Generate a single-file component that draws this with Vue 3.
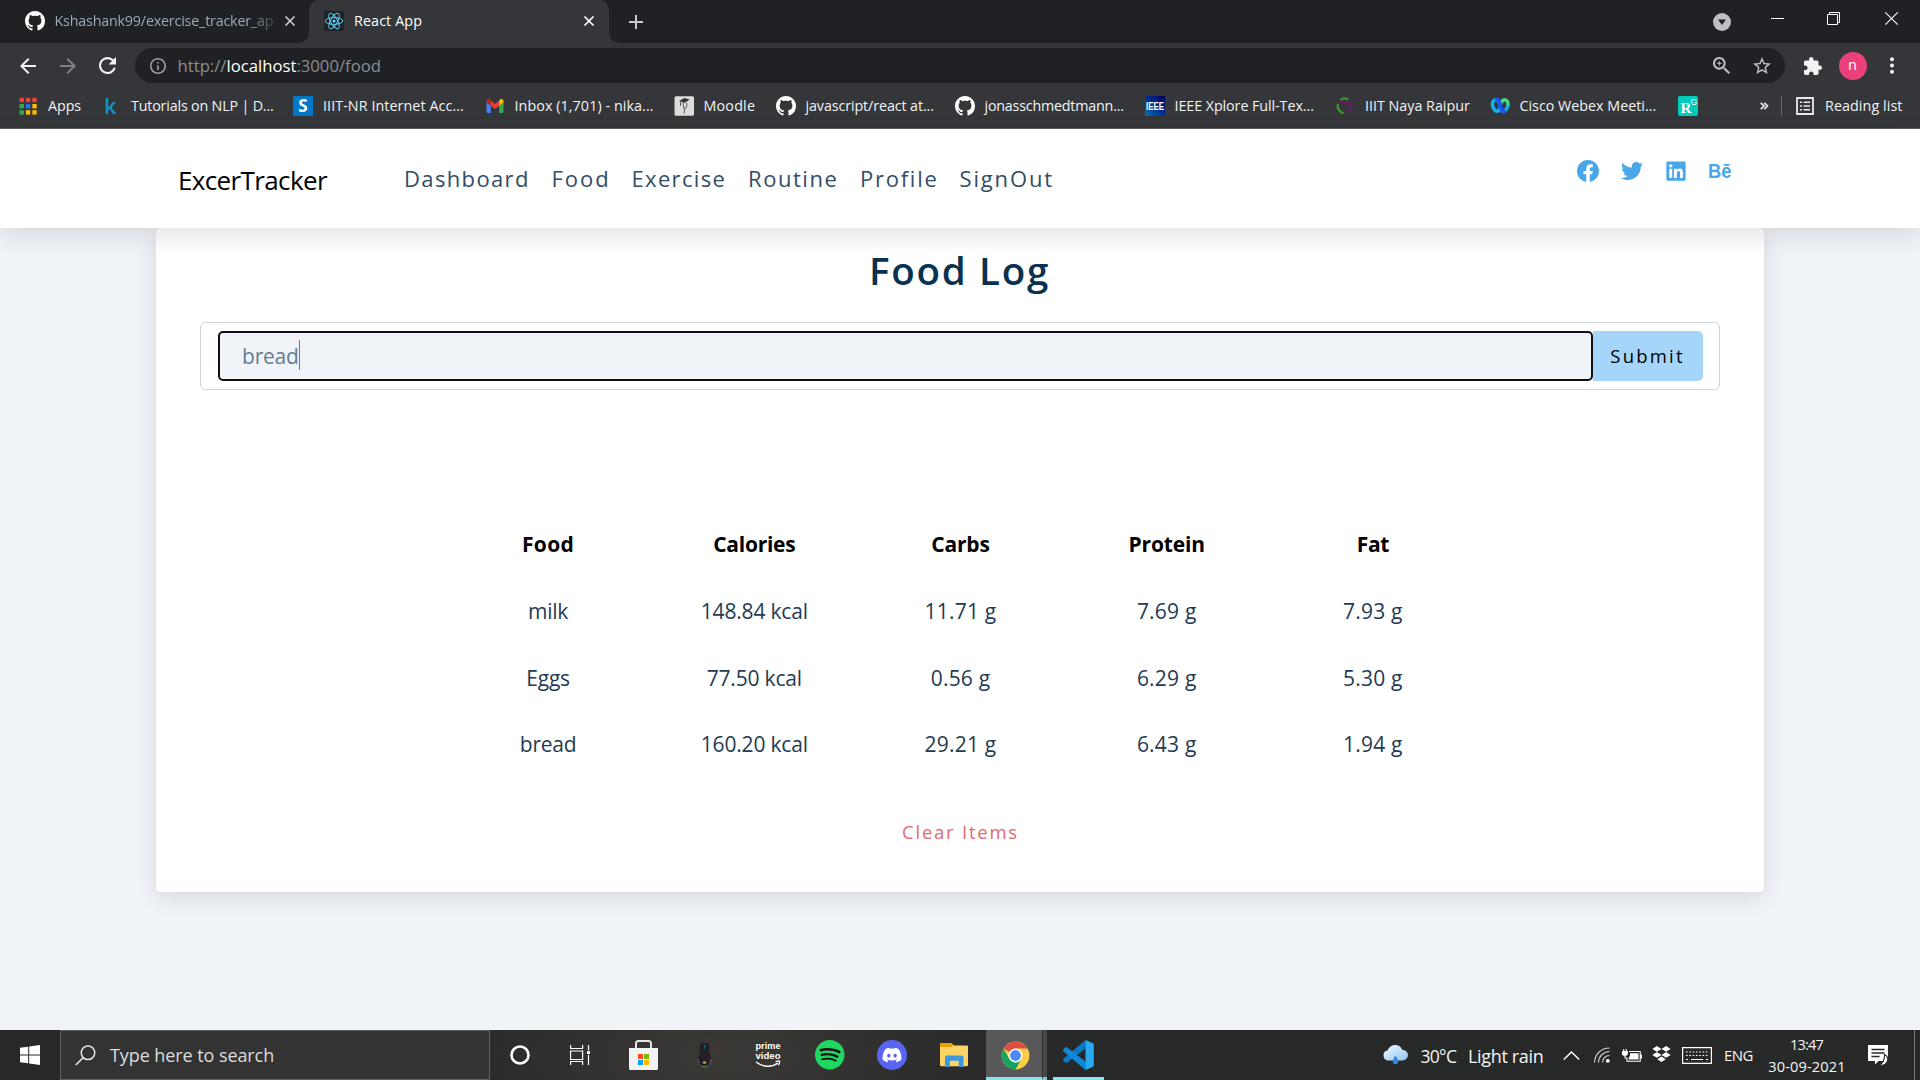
<script setup>
const bookmarks = [
  { id: 'apps', text: 'Apps', width: 83, ls: -0.06 },
  { id: 'k', text: 'Tutorials on NLP | D...', width: 192, ls: -0.18 },
  { id: 's', text: 'IIIT-NR Internet Acc...', width: 191.5, ls: 0.08 },
  { id: 'gmail', text: 'Inbox (1,701) - nika...', width: 189, ls: 0.08 },
  { id: 'moodle', text: 'Moodle', width: 102, ls: 0.2 },
  { id: 'github', text: 'javascript/react at...', width: 179, ls: -0.1 },
  { id: 'github', text: 'jonasschmedtmann...', width: 190, ls: -0.21 },
  { id: 'ieee', text: 'IEEE Xplore Full-Tex...', width: 190.5, ls: -0.07 },
  { id: 'iiit', text: 'IIIT Naya Raipur', width: 154.5, ls: 0 },
  { id: 'webex', text: 'Cisco Webex Meeti...', width: 188.5, ls: 0 },
  { id: 'rg', text: '', width: 20, ls: 0 },
]
const appDots = ['#ea4335', '#ea4335', '#ea4335', '#34a853', '#1a73e8', '#fbbc04', '#34a853', '#fbbc04', '#fbbc04']

const links = [
  { text: 'Dashboard', width: 147.5, ls: 1.36 },
  { text: 'Food', width: 80, ls: 2 },
  { text: 'Exercise', width: 116.5, ls: 1.33 },
  { text: 'Routine', width: 112, ls: 1.55 },
  { text: 'Profile', width: 99.5, ls: 1.75 },
  { text: 'SignOut', width: 96, ls: 1.85 },
]

const heads = [
  { text: 'Food', ls: 0.4 },
  { text: 'Calories', ls: -0.26 },
  { text: 'Carbs', ls: -0.2 },
  { text: 'Protein', ls: -0.15 },
  { text: 'Fat', ls: -0.3 },
]
const rows = [
  ['milk', '148.84 kcal', '11.71 g', '7.69 g', '7.93 g'],
  ['Eggs', '77.50 kcal', '0.56 g', '6.29 g', '5.30 g'],
  ['bread', '160.20 kcal', '29.21 g', '6.43 g', '1.94 g'],
]
const cellSpacing = (i) => (i === 0 ? '-0.25px' : i === 1 ? '-0.18px' : '0.2px')

const githubPath = 'M8 0C3.58 0 0 3.58 0 8c0 3.54 2.29 6.53 5.47 7.59.4.07.55-.17.55-.38 0-.19-.01-.82-.01-1.49-2.01.37-2.53-.49-2.69-.94-.09-.23-.48-.94-.82-1.13-.28-.15-.68-.52-.01-.53.63-.01 1.08.58 1.23.82.72 1.21 1.87.87 2.33.66.07-.52.28-.87.51-1.07-1.78-.2-3.64-.89-3.64-3.95 0-.87.31-1.59.82-2.15-.08-.2-.36-1.02.08-2.12 0 0 .67-.21 2.2.82.64-.18 1.32-.27 2-.27s1.36.09 2 .27c1.53-1.04 2.2-.82 2.2-.82.44 1.1.16 1.92.08 2.12.51.56.82 1.27.82 2.15 0 3.07-1.87 3.75-3.65 3.95.29.25.54.73.54 1.48 0 1.07-.01 1.93-.01 2.2 0 .21.15.46.55.38A8.01 8.01 0 0 0 16 8c0-4.42-3.58-8-8-8z'
</script>

<template>
  <div class="screen">
    <header class="chrome">
      <div class="tabstrip">
        <div class="tab idle">
          <svg class="favicon" viewBox="0 0 16 16" fill="#fff"><path :d="githubPath" /></svg>
          <span class="tab-title faded">Kshashank99/exercise_tracker_ap</span>
          <svg class="close" viewBox="0 0 12 12" stroke="#c8cacd" stroke-width="1.7"><path d="M1.500 1.500l9 9M10.500 1.500l-9 9" /></svg>
        </div>
        <div class="tab active">
          <svg class="favicon" viewBox="0 0 20 20" fill="none" stroke="#61dafb" stroke-width="0.9">
            <rect width="20" height="20" rx="1.5" fill="#20232a" stroke="none" />
            <circle cx="10" cy="10" r="1.5" fill="#61dafb" stroke="none" />
            <ellipse cx="10" cy="10" rx="8.8" ry="3.4" />
            <ellipse cx="10" cy="10" rx="8.8" ry="3.4" transform="rotate(60 10 10)" />
            <ellipse cx="10" cy="10" rx="8.8" ry="3.4" transform="rotate(120 10 10)" />
          </svg>
          <span class="tab-title">React App</span>
          <svg class="close" viewBox="0 0 12 12" stroke="#fff" stroke-width="1.700"><path d="M1.500 1.500l9 9M10.500 1.500l-9 9" /></svg>
        </div>
        <svg class="plus" viewBox="0 0 14 14" stroke="#c8cacd" stroke-width="2"><path d="M7 0v14M0 7h14" /></svg>
        <div class="window-buttons">
          <svg class="media" viewBox="0 0 18 18"><circle cx="9" cy="9" r="9" fill="#bdc1c6" /><path d="M5 6.500h8L9 12z" fill="#202124" /></svg>
          <svg class="min" viewBox="0 0 13 13" stroke="#fff"><path d="M0 6.500h13" /></svg>
          <svg class="restore" viewBox="0 0 13 13" fill="none" stroke="#fff"><path d="M.5 2.500h10v10h-10zM2.500 2.500v-2h10v10h-2" /></svg>
          <svg class="quit" viewBox="0 0 13 13" stroke="#fff" stroke-width="1.100"><path d="M.3.3l12.400 12.400M12.700.3L.3 12.700" /></svg>
        </div>
      </div>

      <div class="toolbar">
        <svg class="back" viewBox="4 4 16 16" fill="#f1f3f4"><path d="M20 11H7.830l5.590-5.590L12 4l-8 8 8 8 1.410-1.410L7.830 13H20v-2z" /></svg>
        <svg class="forward" viewBox="4 4 16 16" fill="#7f8184"><path d="M12 4l-1.410 1.410L16.170 11H4v2h12.170l-5.580 5.590L12 20l8-8z" /></svg>
        <svg class="reload" viewBox="4 4 16 16" fill="#f1f3f4"><path d="M17.650 6.350C16.200 4.900 14.210 4 12 4c-4.420 0-7.990 3.580-7.990 8s3.570 8 7.990 8c3.730 0 6.840-2.550 7.730-6h-2.080c-.82 2.330-3.040 4-5.650 4-3.310 0-6-2.690-6-6s2.690-6 6-6c1.660 0 3.140.69 4.220 1.780L13 11h7V4l-2.350 2.350z" /></svg>
        <div class="omnibox">
          <svg class="info" viewBox="2 2 20 20" fill="#9aa0a6"><path d="M11 7h2v2h-2zm0 4h2v6h-2zm1-9C6.480 2 2 6.480 2 12s4.480 10 10 10 10-4.480 10-10S17.520 2 12 2zm0 18c-4.410 0-8-3.590-8-8s3.590-8 8-8 8 3.590 8 8-3.590 8-8 8z" /></svg>
          <span class="url">http://<b>localhost</b>:3000/food</span>
          <svg class="lens" viewBox="3 3 17.500 17.500" fill="#bdc1c6"><path d="M15.500 14h-.79l-.28-.27C15.410 12.590 16 11.110 16 9.500 16 5.910 13.090 3 9.500 3S3 5.910 3 9.500 5.910 16 9.500 16c1.610 0 3.090-.59 4.230-1.570l.27.28v.79l5 4.990L20.490 19l-4.990-5zm-6 0C7.010 14 5 11.990 5 9.500S7.010 5 9.500 5 14 7.010 14 9.500 11.990 14 9.500 14zm2.500-4h-2v2H9v-2H7V9h2V7h1v2h2v1z" /></svg>
          <svg class="star" viewBox="2 2 20 19" fill="#bdc1c6"><path d="M22 9.240l-7.190-.62L12 2 9.190 8.630 2 9.240l5.460 4.730L5.820 21 12 17.270 18.180 21l-1.630-7.030L22 9.240zM12 15.400l-3.760 2.270 1-4.280-3.320-2.880 4.380-.38L12 6.100l1.710 4.040 4.380.38-3.320 2.880 1 4.280L12 15.400z" /></svg>
        </div>
        <svg class="puzzle" viewBox="2 1 21 21" fill="#f1f3f4"><path d="M20.500 11H19V7c0-1.100-.9-2-2-2h-4V3.500C13 2.120 11.880 1 10.500 1S8 2.120 8 3.500V5H4c-1.100 0-1.990.9-1.990 2v3.800H3.500c1.490 0 2.700 1.210 2.700 2.700s-1.210 2.700-2.700 2.700H2V20c0 1.100.9 2 2 2h3.800v-1.500c0-1.490 1.210-2.700 2.700-2.700 1.490 0 2.700 1.210 2.700 2.700V22H17c1.100 0 2-.9 2-2v-4h1.500c1.380 0 2.500-1.120 2.500-2.500S21.880 11 20.500 11z" /></svg>
        <span class="avatar">n</span>
        <svg class="dots" viewBox="0 0 4 17" fill="#f1f3f4"><circle cx="2" cy="2.300" r="2" /><circle cx="2" cy="8.500" r="2" /><circle cx="2" cy="14.700" r="2" /></svg>
      </div>

      <div class="bookmarks">
        <div v-for="(b, i) in bookmarks" :key="i" class="bookmark" :style="{ width: b.width + 'px', letterSpacing: b.ls + 'px' }">
          <svg viewBox="0 0 20 20">
            <template v-if="b.id === 'apps'">
              <rect v-for="(c, n) in appDots" :key="n" :x="1.5 + (n % 3) * 6.4" :y="1.8 + Math.floor(n / 3) * 6.2" width="4.400" height="4.400" :fill="c" />
            </template>
            <text v-else-if="b.id === 'k'" x="3" y="18" font-size="22" font-family="Open Sans, sans-serif" font-weight="600" fill="#0f93c9" letter-spacing="0">k</text>
            <template v-else-if="b.id === 's'">
              <rect width="20" height="20" fill="#0078c8" />
              <text x="10" y="16" text-anchor="middle" font-size="17" font-family="Open Sans, sans-serif" font-weight="700" fill="#fff" letter-spacing="0">S</text>
            </template>
            <template v-else-if="b.id === 'gmail'">
              <path d="M1.500 6v9.600c0 .7.6 1.300 1.300 1.300h3V9.500z" fill="#4285f4" />
              <path d="M18.500 6v9.600c0 .7-.6 1.300-1.300 1.300h-3V9.500z" fill="#34a853" />
              <path d="M5.800 9.800V4.700L10 7.900l4.200-3.200v5.100L10 13z" fill="#ea4335" />
              <path d="M1.500 6.500V4.900c0-1.700 1.900-2.600 3.200-1.600l1.100.9v5.600z" fill="#c5221f" />
              <path d="M18.500 6.500V4.900c0-1.700-1.900-2.600-3.200-1.600l-1.100.9v5.600z" fill="#fbbc04" />
            </template>
            <template v-else-if="b.id === 'moodle'">
              <rect x=".5" y=".2" width="19.500" height="19.600" rx="1.500" fill="#dcdcdc" />
              <path d="M5 5l5.500-3 5 1.600-2.500 2-4 .6z" fill="#333" />
              <path d="M6.500 5.500v4.500M9 6.800c2.500-1.300 4.300 0 4 2.700l-1.500 3-2-1zM10.300 12v5.500" fill="none" stroke="#555" stroke-width="1" />
            </template>
            <path v-else-if="b.id === 'github'" :d="githubPath" transform="scale(1.25)" fill="#fff" />
            <template v-else-if="b.id === 'ieee'">
              <defs><linearGradient id="ieeeFill" x1="1" y1="0" x2="0" y2="1"><stop offset="0" stop-color="#000050" /><stop offset=".5" stop-color="#00308f" /><stop offset="1" stop-color="#0072bc" /></linearGradient></defs>
              <rect width="20" height="20" fill="url(#ieeeFill)" />
              <text x="10" y="14" text-anchor="middle" font-size="11.500" font-family="Liberation Sans, sans-serif" font-weight="700" fill="#fff" textLength="18" lengthAdjust="spacingAndGlyphs" letter-spacing="0">IEEE</text>
            </template>
            <template v-else-if="b.id === 'iiit'">
              <path d="M5.500 3.800C8 2 11 2 13.500 3.800M3 8c-1.500 4 1.500 8 5.500 9.200" fill="none" stroke="#3f9b2f" stroke-width="2.200" />
              <path d="M4 7.500c4-3 10-1.800 12 1.500M15.800 9c.6 3-.8 5.500-3.300 7" fill="none" stroke="#6b1a6b" stroke-width="2" />
            </template>
            <template v-else-if="b.id === 'webex'">
              <defs><linearGradient id="webexFill" x1="0" y1="0" x2="0" y2="1"><stop offset="0" stop-color="#4fe06a" /><stop offset=".6" stop-color="#12b5e5" /><stop offset="1" stop-color="#1c8df0" /></linearGradient></defs>
              <ellipse cx="14" cy="9.500" rx="3.800" ry="5.800" transform="rotate(14 14 9.500)" fill="none" stroke="url(#webexFill)" stroke-width="3.600" />
              <ellipse cx="6.300" cy="9.500" rx="3.600" ry="5.800" transform="rotate(-14 6.300 9.500)" fill="#35363a" stroke="#10b3ea" stroke-width="3.600" />
              <path d="M7 3.600c3 .6 3.500 11.800 6.800 12.200" fill="none" stroke="#1c55f0" stroke-width="4.200" stroke-linecap="round" />
            </template>
            <template v-else>
              <rect width="20" height="20" rx="2" fill="#00ccbb" />
              <text x="2.500" y="16.500" font-size="15" font-family="Liberation Serif, serif" font-weight="700" fill="#fff" letter-spacing="0">R</text>
              <text x="12.500" y="8.500" font-size="8.500" font-family="Liberation Sans, sans-serif" fill="#fff" letter-spacing="0">G</text>
            </template>
          </svg>
          <span v-if="b.text">{{ b.text }}</span>
        </div>
        <svg class="more" viewBox="0 0 8 8" fill="none" stroke="#e8eaed" stroke-width="1.700"><path d="M.8.8L4 4 .8 7.200M4.300.8L7.500 4 4.300 7.200" /></svg>
        <i class="divider"></i>
        <svg class="list" viewBox="0 0 18 18" fill="none" stroke="#e8eaed" stroke-width="1.800"><path d="M1 1h16v16H1z" /><path d="M4 5.200h2M7.500 5.200H14M4 9h2M7.500 9H14M4 12.800h2M7.500 12.800H14" stroke-width="1.600" /></svg>
        <span class="reading">Reading list</span>
      </div>
    </header>

    <main class="page">
      <nav class="nav">
        <span class="brand">ExcerTracker</span>
        <a v-for="l in links" :key="l.text" class="link" :style="{ width: l.width + 'px', letterSpacing: l.ls + 'px' }">{{ l.text }}</a>
        <div class="social">
          <svg width="22" height="22" viewBox="8 8 496 496"><path d="M504 256C504 119 393 8 256 8S8 119 8 256c0 123.780 90.690 226.380 209.250 245V327.690h-63V256h63v-54.640c0-62.150 37-96.480 93.670-96.480 27.140 0 55.520 4.840 55.520 4.840v61h-31.280c-30.800 0-40.410 19.120-40.410 38.730V256h68.780l-11 71.690h-57.780V501C413.310 482.380 504 379.780 504 256z" /></svg>
          <svg width="22" height="22" viewBox="0 0 512 512"><path d="M459.370 151.716c.325 4.548.325 9.097.325 13.645 0 138.720-105.583 298.558-298.558 298.558-59.452 0-114.680-17.219-161.137-47.106 8.447.974 16.568 1.299 25.340 1.299 49.055 0 94.213-16.568 130.274-44.832-46.132-.975-84.792-31.188-98.112-72.772 6.498.974 12.995 1.624 19.818 1.624 9.421 0 18.843-1.300 27.614-3.573-48.081-9.747-84.143-51.980-84.143-102.985v-1.299c13.969 7.797 30.214 12.670 47.431 13.319-28.264-18.843-46.781-51.005-46.781-87.391 0-19.492 5.197-37.360 14.294-52.954 51.655 63.675 129.300 105.258 216.365 109.807-1.624-7.797-2.599-15.918-2.599-24.040 0-57.828 46.782-104.934 104.934-104.934 30.213 0 57.502 12.670 76.670 33.137 23.715-4.548 46.456-13.320 66.599-25.340-7.798 24.366-24.366 44.833-46.132 57.827 21.117-2.273 41.584-8.122 60.426-16.243-14.292 20.791-32.161 39.308-52.628 54.253z" /></svg>
          <svg width="20" height="22" viewBox="0 0 448 512" class="in"><path d="M416 32H31.900C14.300 32 0 46.500 0 64.300v383.400C0 465.500 14.300 480 31.900 480H416c17.600 0 32-14.500 32-32.300V64.300c0-17.800-14.400-32.300-32-32.300zM135.400 416H69V202.200h66.500V416zm-33.200-243c-21.300 0-38.500-17.300-38.500-38.500S80.900 96 102.200 96c21.200 0 38.500 17.300 38.500 38.500 0 21.300-17.200 38.500-38.500 38.500zm282.100 243h-66.400V312c0-24.800-.5-56.700-34.500-56.700-34.600 0-39.900 27-39.900 54.900V416h-66.400V202.200h63.700v29.200h.9c8.900-16.800 30.600-34.500 62.900-34.500 67.200 0 79.700 44.300 79.700 101.900V416z" /></svg>
          <svg width="25" height="22" viewBox="0 0 25 22"><text x="0" y="18" font-family="Liberation Sans, sans-serif" font-weight="700" font-size="19.500" textLength="23.500" lengthAdjust="spacingAndGlyphs">Bē</text></svg>
        </div>
      </nav>

      <section class="card">
        <h2>Food Log</h2>
        <div class="form">
          <div class="field"><span>bread</span><i class="caret"></i></div>
          <button class="submit">Submit</button>
        </div>
        <div class="table">
          <div class="row head">
            <span v-for="h in heads" :key="h.text" :style="{ letterSpacing: h.ls + 'px' }">{{ h.text }}</span>
          </div>
          <div v-for="r in rows" :key="r[0]" class="row">
            <span v-for="(c, i) in r" :key="i" :style="{ letterSpacing: cellSpacing(i) }">{{ c }}</span>
          </div>
        </div>
        <button class="clear">Clear Items</button>
      </section>
    </main>

    <footer class="taskbar">
      <div class="start"><svg width="20" height="20" viewBox="0 0 20 20" fill="#fff"><path d="M0 2.800L8.200 1.700v7.800H0zM9.200 1.500L20 0v9.500H9.200zM0 10.500h8.200v7.800L0 17.200zM9.200 10.500H20V20L9.200 18.500z" /></svg></div>
      <div class="search">
        <svg width="21" height="21" viewBox="0 0 21 21" fill="none" stroke="#e6e6e6" stroke-width="1.500"><circle cx="13" cy="7.800" r="6.800" /><path d="M8.200 12.600L.8 20" /></svg>
        <span>Type here to search</span>
      </div>
      <svg class="cortana" viewBox="0 0 20 20" fill="none" stroke="#fff" stroke-width="2.600"><circle cx="10" cy="10" r="8.500" /></svg>
      <svg class="taskview" viewBox="0 0 20 20" fill="none" stroke="#fff" stroke-width="1.200"><path d="M.6 0v3.500h12V0M.6 20v-3.500h12V20M.6 6h12v8.500H.6zM18.500 0v5.500M18.500 10v10" /><path d="M17 6.200h3v2.800h-3z" fill="#fff" stroke="none" /></svg>
      <svg class="store" viewBox="0 0 29 30"><path d="M7 9V3.500C7 1.800 7.800 1 9.500 1h10c1.700 0 2.500.8 2.500 2.500V9" fill="none" stroke="#e4e4e4" stroke-width="2" /><path d="M0 8h29v20.500c0 .8-.7 1.500-1.500 1.500h-26C.7 30 0 29.300 0 28.500z" fill="#f3f3f3" /><path d="M9 14h5v5H9z" fill="#f25022" /><path d="M15 14h5v5h-5z" fill="#7fba00" /><path d="M9 20h5v5H9z" fill="#00a4ef" /><path d="M15 20h5v5h-5z" fill="#ffb900" /></svg>
      <svg class="mouse" viewBox="0 0 16 26"><path d="M4.500.5h7c1.500 0 2 2 1.600 5-.4 3-.3 5 1 8 2 5 .3 12-6.100 12S-.1 18.500 1.900 13.500c1.300-3 1.400-5 1-8-.4-3 .1-5 1.600-5z" fill="#221f27" /><path d="M1.200 17.500c0 2.500.8 4.500 2 6M14.800 17.500c0 2.500-.8 4.500-2 6" fill="none" stroke="#7d5a78" /><path d="M4 24.500c2.500 1.500 5.500 1.500 8 0" fill="none" stroke="#4ea55b" /><path d="M7.300 2.500h1.500v4H7.300z" fill="#0f6f86" /><ellipse cx="8" cy="21" rx="1.900" ry="1.300" fill="#b9b030" /></svg>
      <svg class="prime" viewBox="0 0 26 27" fill="#fff"><text x="13" y="6.500" text-anchor="middle" textLength="25" lengthAdjust="spacingAndGlyphs">prime</text><text x="13" y="16.700" text-anchor="middle" textLength="25" lengthAdjust="spacingAndGlyphs">video</text><path d="M1 20c7 5.300 16 5.500 22 1" fill="none" stroke="#fff" stroke-width="1.500" /><path d="M20.500 19.700c2-.8 4-.6 4.200-.2s-.3 2.600-1.600 3.800" fill="none" stroke="#fff" stroke-width="1.200" /></svg>
      <svg class="spotify" viewBox="0 0 24 24"><circle cx="12" cy="12" r="11" fill="#14110f" /><path fill="#1ed760" d="M12 0C5.400 0 0 5.400 0 12s5.400 12 12 12 12-5.400 12-12S18.660 0 12 0zm5.521 17.340c-.24.359-.66.480-1.021.240-2.820-1.740-6.360-2.101-10.561-1.141-.418.122-.779-.179-.899-.539-.12-.421.180-.780.540-.9 4.560-1.021 8.520-.6 11.640 1.320.420.180.479.659.301 1.020zm1.440-3.300c-.301.420-.841.6-1.262.3-3.239-1.980-8.159-2.580-11.939-1.380-.479.120-1.020-.120-1.140-.6-.120-.480.120-1.021.6-1.141C9.600 9.900 15 10.561 18.720 12.840c.361.181.540.780.241 1.200zm.120-3.360C15.240 8.400 8.820 8.160 5.160 9.301c-.6.179-1.200-.181-1.380-.721-.180-.601.180-1.200.720-1.381 4.260-1.260 11.280-1.020 15.721 1.621.539.3.719 1.020.419 1.560-.299.421-1.020.599-1.559.3z" /></svg>
      <svg class="discord" viewBox="0 0 30 30"><circle cx="15" cy="15" r="15" fill="#5865f2" /><g transform="translate(5.500 5.500) scale(.79)"><path fill="#fff" d="M20.317 4.370a19.791 19.791 0 0 0-4.885-1.515.074.074 0 0 0-.079.037c-.211.375-.445.865-.608 1.250-1.845-.276-3.680-.276-5.487 0-.164-.393-.406-.874-.618-1.250a.077.077 0 0 0-.079-.037 19.736 19.736 0 0 0-4.885 1.515.070.070 0 0 0-.032.028C.533 9.046-.319 13.580.099 18.058a.082.082 0 0 0 .031.056c2.053 1.508 4.041 2.423 5.993 3.029a.078.078 0 0 0 .084-.028c.462-.630.873-1.295 1.226-1.994a.076.076 0 0 0-.042-.106c-.653-.248-1.274-.550-1.872-.892a.077.077 0 0 1-.008-.128c.126-.094.252-.192.372-.291a.074.074 0 0 1 .078-.011c3.928 1.793 8.180 1.793 12.061 0a.074.074 0 0 1 .079.010c.120.099.246.198.373.292a.077.077 0 0 1-.007.128 12.299 12.299 0 0 1-1.873.891.077.077 0 0 0-.041.107c.360.698.772 1.363 1.225 1.993a.076.076 0 0 0 .084.029c1.961-.607 3.950-1.522 6.002-3.029a.077.077 0 0 0 .031-.055c.500-5.177-.838-9.674-3.549-13.660a.061.061 0 0 0-.031-.029zM8.020 15.331c-1.183 0-2.157-1.086-2.157-2.419s.956-2.419 2.157-2.419c1.211 0 2.176 1.095 2.157 2.419 0 1.333-.956 2.419-2.157 2.419zm7.975 0c-1.183 0-2.157-1.086-2.157-2.419s.955-2.419 2.157-2.419c1.211 0 2.176 1.095 2.157 2.419 0 1.333-.946 2.419-2.157 2.419z" /></g></svg>
      <svg class="folder" viewBox="0 0 28 24"><path d="M0 1.200C0 .5.500 0 1.200 0H11l3 2.500H27c.6 0 1 .4 1 1V22c0 .7-.5 1.200-1.200 1.200H1.200C.5 23.200 0 22.700 0 22z" fill="#ffd467" /><path d="M0 1.200C0 .5.500 0 1.200 0H11.500l2 2-2 2H0z" fill="#e6a100" /><path d="M5 24v-9.500c0-1.200.8-2 2-2h14.500c1.200 0 2 .8 2 2V24h-4.800v-6.200H9.800V24z" fill="#3f97dd" /></svg>
      <div class="task current"><svg width="29" height="29" viewBox="0 0 48 48"><circle cx="24" cy="24" r="23" fill="#ffcd46" /><path d="M24 24L4.100 12.500A23 23 0 0 1 43.900 12.500H24z" fill="#dd4f43" /><path d="M24 47A23 23 0 0 1 4.100 12.500L14 29.800 24 35.500 34 29.700z" fill="#1aa260" /><circle cx="24" cy="24" r="11.500" fill="#fff" /><circle cx="24" cy="24" r="9" fill="#4c8bf5" /></svg></div>
      <div class="task-edge"></div>
      <div class="task code"><svg width="31" height="30" viewBox="0 0 31 30"><path d="M22.500 0v8.500L4.200 22.600c-.6.500-1.300.5-1.900 0L.6 21c-.7-.7-.7-1.700 0-2.400z" fill="#0b78c4" /><path d="M22.500 30v-8.500L4.200 7.400c-.6-.5-1.300-.5-1.900 0L.6 9c-.7.7-.7 1.700 0 2.400z" fill="#1088d8" /><path d="M22.500 0l7 3c.9.4 1.300 1 1.300 2v20c0 1-.4 1.600-1.300 2l-7 3z" fill="#29a9f2" /></svg></div>

      <div class="tray">
        <svg class="cloud" viewBox="0 0 25 20"><defs><linearGradient id="cloudFill" x1="0" y1="0" x2="1" y2="1"><stop offset="0" stop-color="#f2faff" /><stop offset="1" stop-color="#8fc4f2" /></linearGradient></defs><path d="M5.500 15.500a5.200 5.200 0 0 1-.8-10.300C6 2 8.800 0 12.200 0c3.300 0 6 1.900 7 4.700 3.300.2 5.800 2.500 5.800 5.400s-2.500 5.400-5.600 5.400z" fill="url(#cloudFill)" /><path d="M12.500 10.500c1.400 2.200 2.700 4 2.700 6a2.700 2.700 0 0 1-5.400 0c0-2 1.300-3.800 2.700-6z" fill="#2f86e4" /></svg>
        <span class="temp">30°C</span>
        <span class="rain">Light rain</span>
        <svg class="chevron" viewBox="0 0 17 9" fill="none" stroke="#fff" stroke-width="1.500"><path d="M.8 8.500l7.700-7.500 7.700 7.500" /></svg>
        <svg class="wifi" viewBox="0 0 16 16" fill="none" stroke="#d0d0d0" stroke-width="1.100"><path d="M.6 15.500C.6 7.500 7 1 15.500 1M4.500 15.500c0-6 5-11 11-11M8.500 15.500c0-4 3-7 7-7" /><circle cx="13.800" cy="13.800" r="1.900" fill="#fff" stroke="none" /></svg>
        <svg class="battery" viewBox="0 0 20 13" fill="none" stroke="#fff" stroke-width="1.100"><path d="M7 2.500h11.200v9.800H5V9" /><path d="M8 4.300h8.500v6.200h-9.800V8.500L8 7z" fill="#fff" stroke="none" /><path d="M18.200 5.500h1.800v4h-1.800z" fill="#fff" stroke="none" /><path d="M.5 2.500h4.800v2.200c0 1-.8 1.600-2.400 1.600S.5 5.700.5 4.700z" fill="#fff" /><path d="M1.700 0v2.500M4.200 0v2.500M3 6.500V9h2" /></svg>
        <svg class="dropbox" viewBox="0 0 19 16" fill="#fff"><path d="M4.900 0l4.600 2.900-4.600 2.900L.3 2.900zM14.100 0l4.600 2.900-4.600 2.900-4.600-2.900zM4.900 6l4.600 2.900-4.600 2.900L.3 8.900zM14.100 6l4.600 2.900-4.600 2.900-4.600-2.900zM9.500 10.500l4.200 2.700L9.500 16l-4.200-2.800z" /></svg>
        <svg class="keyboard" viewBox="0 0 30 17" fill="none" stroke="#fff" stroke-width="1.200"><path d="M.6.6h28.800v15.800H.6z" /><path d="M4 5h22M4 8.500h22" stroke-dasharray="1.600 1.700" /><path d="M4 12.500h2M9 12.500h12M24 12.500h2" /></svg>
        <span class="lang">ENG</span>
        <div class="clock"><span class="time">13:47</span><span class="date">30-09-2021</span></div>
        <svg class="note" viewBox="0 0 21 21"><path d="M0 0h20v16h-9.500L7 19.500V16H0z" fill="#fff" /><path d="M3.500 4.500h13M3.500 8h13M3.500 11.500h8" stroke="#2a2a2a" stroke-width="1.300" /><path d="M16.500 9.500c2.800 1.500 4 4.500 2.500 7.500s-4.500 4-8 2.500c3.500-.5 6-4.500 5.500-10z" fill="#fff" stroke="#2a2a2a" stroke-width="1.100" /></svg>
        <i class="peek"></i>
      </div>
    </footer>
  </div>
</template>

<style>
html, body { margin: 0; background: #f0f4f8; }
</style>

<style scoped>
.screen { width: 1920px; height: 1080px; overflow: hidden; display: flex; flex-direction: column; font-family: "Open Sans", "Noto Sans", sans-serif; }
.screen * { box-sizing: border-box; }
.screen span, .screen a, .screen button, .screen h2 { white-space: nowrap; }
svg { display: block; flex: none; overflow: visible; }
button { border: 0; padding: 0; background: none; font-family: inherit; }

.chrome { height: 129px; flex: none; background: #35363a; border-bottom: 1px solid #5d5e62; color: #f1f3f4; font-size: 14.3px; }
.tabstrip { height: 43px; background: #202124; display: flex; align-items: center; }
.tab { height: 43px; display: flex; align-items: center; padding-bottom: 1px; }
.favicon { width: 20px; height: 20px; }
.idle { width: 309px; padding-left: 24.5px; }
.active { position: relative; width: 300px; padding-left: 15px; background: #35363a; border-radius: 10px 10px 0 0; color: #fff; }
.active::before, .active::after { content: ""; position: absolute; bottom: 0; width: 10px; height: 10px; }
.active::before { left: -10px; background: radial-gradient(circle at 0 0, transparent 9.5px, #35363a 10px); }
.active::after { right: -10px; background: radial-gradient(circle at 100% 0, transparent 9.5px, #35363a 10px); }
.tab-title { margin-left: 10px; line-height: 20px; letter-spacing: 0.12px; }
.faded { width: 219px; margin-left: 10px; overflow: hidden; color: #9aa9b8; letter-spacing: -0.19px; -webkit-mask-image: linear-gradient(90deg, #000 88%, rgba(0, 0, 0, 0.25)); mask-image: linear-gradient(90deg, #000 88%, rgba(0, 0, 0, 0.25)); }
.close { width: 12px; height: 12px; }
.idle .close { margin-left: 10.5px; }
.active .close { margin-left: auto; margin-right: 14.5px; }
.plus { width: 14px; height: 14px; margin-left: 20px; }
.window-buttons { margin-left: auto; display: flex; align-items: center; padding-bottom: 6px; }
.media { width: 18px; height: 18px; margin-right: 40px; margin-top: 6px; }
.min, .restore, .quit { width: 13px; height: 13px; }
.min { margin-right: 43px; }
.restore { margin-right: 45px; }
.quit { margin-right: 22px; }

.toolbar { height: 45px; display: flex; align-items: center; padding-left: 19.5px; }
.back, .forward, .reload { width: 16px; height: 16px; }
.forward { margin-left: 24px; }
.reload { margin-left: 23.5px; width: 17px; height: 17px; }
.omnibox { width: 1650px; height: 35px; margin-left: 19px; border-radius: 18px; background: #202124; display: flex; align-items: center; }
.info { width: 16px; height: 16px; margin-left: 14.5px; }
.url { margin-left: 12px; font-size: 16.7px; color: #8a8d91; }
.url b { font-weight: 400; color: #fff; }
.lens { width: 17px; height: 17px; margin-left: auto; }
.star { width: 18px; height: 17px; margin-left: 23px; margin-right: 14px; }
.puzzle { width: 18px; height: 18px; margin-left: 18.5px; }
.avatar { width: 28px; height: 28px; margin-left: 17px; border-radius: 50%; background: #ec407a; color: #fff; text-align: center; line-height: 26px; font-size: 14.5px; }
.dots { width: 4px; height: 17px; margin-left: 23px; }

.bookmarks { height: 36px; display: flex; align-items: center; padding-left: 18px; }
.bookmark { flex: none; display: flex; align-items: center; }
.bookmark svg { width: 20px; height: 20px; }
.bookmark span { margin-left: 10px; line-height: 20px; }
.more { width: 8px; height: 8px; margin-left: 62px; margin-top: -1px; }
.divider { width: 1px; height: 20px; margin-left: 13px; background: #6a6b6f; }
.list { width: 18px; height: 18px; margin-left: 14px; }
.reading { margin-left: 11px; line-height: 20px; letter-spacing: 0.08px; }

.page { height: 901px; flex: none; background: #f0f4f8; }
.nav { position: relative; z-index: 1; height: 99px; display: flex; align-items: center; background: #fff; box-shadow: 0 8px 24px rgba(0, 0, 0, 0.11); padding-left: 178px; }
.brand { width: 226px; font-size: 26px; letter-spacing: -0.63px; padding-top: 2px; color: #000; }
.link { font-size: 22px; color: #324d67; margin-top: -2px; }
.social { margin-left: auto; width: 343px; height: 22px; margin-top: -15px; display: flex; gap: 22px; fill: #49a6e9; }
.social .in { margin-left: 1px; }

.card { width: 1608px; height: 664px; margin: 0 auto; background: #fff; border-radius: 5px; box-shadow: 0 6px 22px rgba(0, 0, 0, 0.11); padding: 14px 44px 0; display: flex; flex-direction: column; align-items: center; }
h2 { margin: 0; height: 56px; line-height: 56px; font-size: 38.5px; font-weight: 600; letter-spacing: 1.75px; color: #0a3150; padding-right: 1px; }
.form { width: 1520px; height: 68px; margin-top: 24px; border: 1px solid #d0d5dd; border-radius: 5px; display: flex; align-items: center; padding-left: 17px; }
.field { width: 1375px; height: 50px; border: 2px solid #101010; border-radius: 5px; background: #f0f4f8; display: flex; align-items: center; padding-left: 22px; font-size: 21px; letter-spacing: -0.2px; color: #617d98; }
.caret { width: 1.5px; height: 30px; background: #617d98; margin-top: -2px; }
.submit { width: 110px; height: 50px; background: #a5d5f9; border-radius: 0 5px 5px 0; font-size: 18.5px; letter-spacing: 2.2px; color: #000; padding: 0 1px 2px 0; }
.table { width: 1032px; margin-top: 121px; padding-left: 1px; }
.row { height: 66.7px; display: flex; align-items: center; font-size: 21px; color: #243b53; }
.row span { flex: 1; text-align: center; }
.head { color: #000; font-weight: 700; }
.clear { margin-top: 39px; height: 30px; line-height: 30px; font-size: 18.5px; letter-spacing: 1.76px; color: #e66a6a; padding-left: 1px; }

.taskbar { height: 50px; flex: none; display: flex; align-items: center; background: radial-gradient(ellipse 300px 120px at 720px 25px, #3b3936, rgba(59, 57, 54, 0) 100%), #272828; color: #f5f5f5; }
.start { width: 60px; padding-left: 20px; }
.search { width: 430px; height: 50px; background: #333; border: 1px solid #606060; display: flex; align-items: center; padding-left: 14px; font-size: 18px; color: #dcdcdc; letter-spacing: -0.08px; }
.search span { margin-left: 14px; }
.cortana { width: 20px; height: 20px; margin-left: 20px; }
.taskview { width: 20px; height: 20px; margin-left: 40px; }
.store { width: 29px; height: 30px; margin-left: 39px; }
.mouse { width: 15px; height: 26px; margin-left: 39px; }
.prime { width: 26px; height: 27px; margin-left: 43px; font: 700 9px "Liberation Sans", sans-serif; }
.spotify { width: 29.5px; height: 29.5px; margin-left: 34px; }
.discord { width: 30px; height: 30px; margin-left: 32px; }
.folder { width: 28px; height: 24px; margin-left: 33px; }
.task { height: 50px; display: flex; align-items: center; justify-content: center; border-bottom: 3px solid #87e3ec; padding-top: 3px; }
.current { width: 56px; margin-left: 18.5px; padding-left: 3px; background: #585858; }
.task-edge { width: 5px; height: 50px; background: #474747; border-left: 1px solid #303030; border-bottom: 3px solid #7ccdd5; }
.code { width: 51px; margin-left: 6px; }
.tray { margin-left: auto; height: 50px; display: flex; align-items: center; }
.cloud { width: 25px; height: 20px; }
.temp { width: 47.5px; margin-left: 13px; font-size: 17.5px; letter-spacing: -0.7px; padding-top: 2px; }
.rain { width: 94.5px; font-size: 18px; letter-spacing: -0.34px; padding-top: 2px; }
.chevron { width: 17px; height: 9px; }
.wifi { width: 16px; height: 16px; margin-left: 14px; }
.battery { width: 20px; height: 13px; margin-left: 12px; }
.dropbox { width: 19px; height: 16px; margin-left: 10px; margin-top: -2px; }
.keyboard { width: 30px; height: 17px; margin-left: 11.5px; }
.lang { width: 30px; margin-left: 12px; font-size: 15px; letter-spacing: -0.6px; }
.clock { width: 76px; margin-left: 15px; display: flex; flex-direction: column; align-items: center; font-size: 14.6px; line-height: 22.5px; }
.time { letter-spacing: -0.8px; padding-right: 1px; }
.date { letter-spacing: 0.12px; }
.note { width: 21px; height: 21px; margin-left: 23px; }
.peek { width: 1px; height: 50px; margin-left: 25px; margin-right: 5px; background: #7a7a7a; }
</style>
